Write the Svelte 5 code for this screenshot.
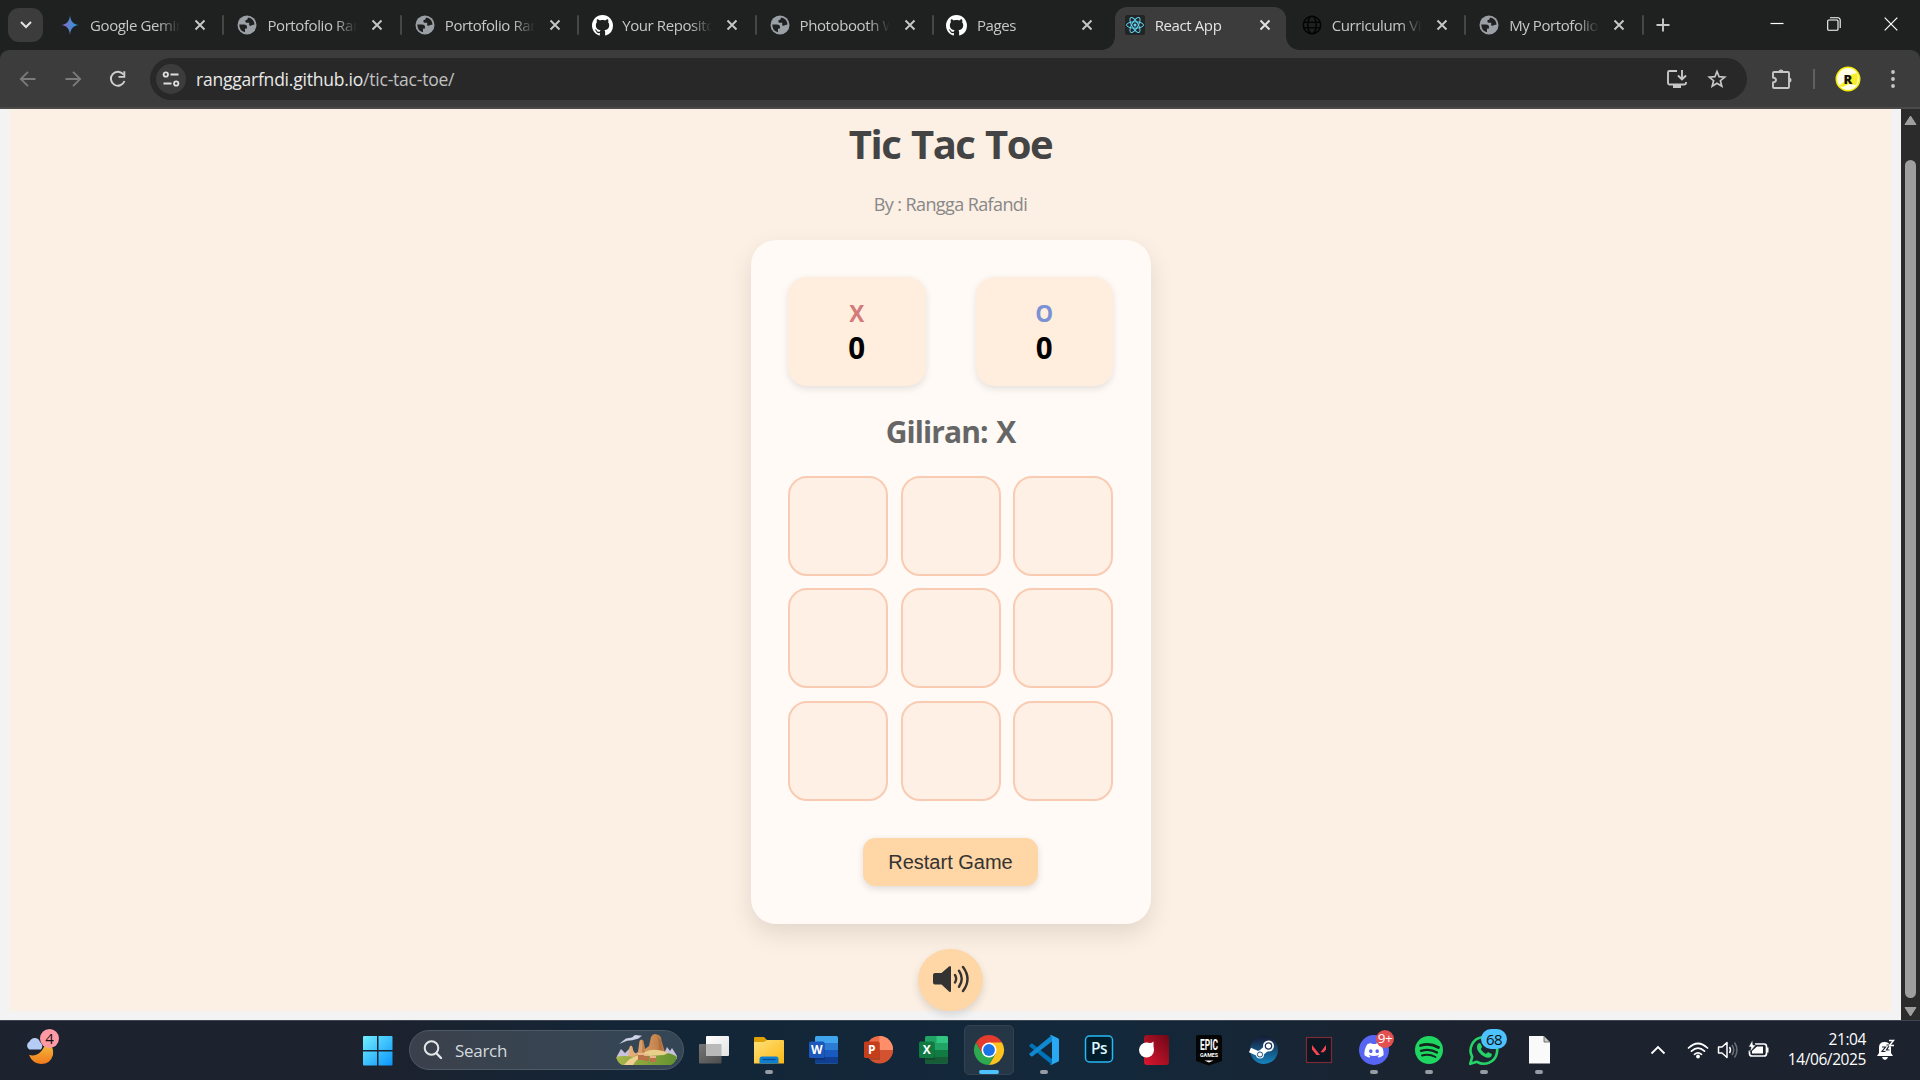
<script>
  const tabs = [
    { icon: 'gemini', title: 'Google Gemini' },
    { icon: 'globe', title: 'Portofolio Rangga' },
    { icon: 'globe', title: 'Portofolio Rangga' },
    { icon: 'github', title: 'Your Repositories' },
    { icon: 'globe', title: 'Photobooth Web' },
    { icon: 'github', title: 'Pages' },
    { icon: 'react', title: 'React App', active: true },
    { icon: 'wire', title: 'Curriculum Vitae' },
    { icon: 'globe', title: 'My Portofolio' }
  ];
  const apps = [
    { name: 'taskview' },
    { name: 'explorer', open: true },
    { name: 'word' },
    { name: 'powerpoint' },
    { name: 'excel' },
    { name: 'chrome', active: true },
    { name: 'vscode', open: true },
    { name: 'photoshop' },
    { name: 'redapp' },
    { name: 'epic' },
    { name: 'steam' },
    { name: 'valorant' },
    { name: 'discord', open: true, badge: '9+', tone: 'red' },
    { name: 'spotify', open: true },
    { name: 'whatsapp', open: true, badge: '68', tone: 'blue' },
    { name: 'file', open: true }
  ];

  let board = $state(Array(9).fill(''));
  let turn = $state('X');
  const scores = $state({ X: 0, O: 0 });
  const lines = [[0, 1, 2], [3, 4, 5], [6, 7, 8], [0, 3, 6], [1, 4, 7], [2, 5, 8], [0, 4, 8], [2, 4, 6]];

  function winner() {
    return lines.some(([a, b, c]) => board[a] && board[a] === board[b] && board[b] === board[c]);
  }
  function play(i) {
    if (board[i] || winner()) return;
    board[i] = turn;
    if (winner()) scores[turn] += 1;
    else turn = turn === 'X' ? 'O' : 'X';
  }
  function restart() {
    board = Array(9).fill('');
    turn = 'X';
  }
</script>

{#snippet favicon(name)}
  {#if name === 'gemini'}
    <svg width="20" height="22" viewBox="0 0 20 22">
      <defs><linearGradient id="gem" x1="0" x2="1"><stop offset="0.1" stop-color="#9168c0" /><stop offset="0.5" stop-color="#5684d1" /><stop offset="1" stop-color="#1ba1e3" /></linearGradient></defs>
      <path fill="url(#gem)" d="M10 1C10.5 7 13 10.500 19 11C13 11.500 10.500 15 10 21C9.500 15 7 11.500 1 11C7 10.500 9.500 7 10 1Z" />
    </svg>
  {:else if name === 'globe'}
    <svg width="22" height="22" viewBox="1 1 22 22">
      <circle cx="12" cy="12" r="9.500" fill="#9aa0a6" />
      <path fill="#1f2120" d="M4.300 11.500H9q3 0 3 2.500v1.500h-1.500q-.5 0-.5 1v2.800Q4.300 18 4.300 11.500zM13 4.500q0 2.500-2.500 2.700-.8 2.300 1 2.600h2.700v2.500q1 1 2.500 0l2.800-.8Q19 5.500 13 4.500z" />
    </svg>
  {:else if name === 'github'}
    <svg width="21" height="21" viewBox="0 0 16 16"><path fill="#fff" d="M8 0C3.580 0 0 3.580 0 8c0 3.540 2.290 6.530 5.470 7.590.4.070.55-.17.55-.38 0-.19-.01-.82-.01-1.490-2.010.37-2.530-.49-2.690-.94-.09-.23-.48-.94-.82-1.130-.28-.15-.68-.52-.01-.53.63-.01 1.080.58 1.230.82.72 1.210 1.870.87 2.330.66.070-.52.28-.87.51-1.070-1.780-.2-3.640-.89-3.640-3.950 0-.87.31-1.590.82-2.150-.08-.2-.36-1.020.08-2.120 0 0 .67-.21 2.200.82.64-.18 1.320-.27 2-.27s1.360.09 2 .27c1.530-1.040 2.200-.82 2.200-.82.44 1.100.16 1.920.08 2.120.51.56.82 1.270.82 2.150 0 3.070-1.870 3.750-3.650 3.950.29.25.54.73.54 1.480 0 1.070-.01 1.930-.01 2.200 0 .21.15.46.55.38A8.010 8.010 0 0 0 16 8c0-4.420-3.580-8-8-8z" /></svg>
  {:else if name === 'react'}
    <svg width="20" height="20" viewBox="-10 -10 20 20">
      <rect x="-10" y="-10" width="20" height="20" rx="2" fill="#222526" />
      <g fill="none" stroke="#5fd3f3" stroke-width="1">
        <ellipse rx="8.500" ry="3.200" /><ellipse rx="8.500" ry="3.200" transform="rotate(60)" /><ellipse rx="8.500" ry="3.200" transform="rotate(120)" />
      </g>
      <circle r="1.500" fill="#5fd3f3" />
    </svg>
  {:else}
    <svg width="20" height="20" viewBox="-10 -10 20 20"><g fill="none" stroke="#050505" stroke-width="1.600"><circle r="8.700" /><ellipse rx="4.200" ry="8.700" /><path d="M-8.500-2.800h17M-8.500 2.800h17" /></g></svg>
  {/if}
{/snippet}

{#snippet officeSheet(c)}
  <rect x="-9" y="-14" width="23" height="27.500" rx="1.500" fill={c[0]} />
  <rect x="-9" y="-7" width="23" height="7" fill={c[1]} />
  <rect x="-9" y="0" width="23" height="7" fill={c[2]} />
  <path d="M-9 7h23v5a1.500 1.500 0 0 1-1.500 1.500h-20A1.500 1.500 0 0 1-9 12z" fill={c[3]} />
{/snippet}

{#snippet officeTile(letter, color)}
  <rect x="-9" y="-7" width="10" height="17" fill="#000" opacity=".18" />
  <rect x="-15" y="-8.500" width="15.500" height="16.500" rx="1.500" fill={color} />
  <text x="-7.300" y="4.200" text-anchor="middle" class="glyph">{letter}</text>
{/snippet}

{#snippet appIcon(name)}
  <svg class="app-icon" viewBox="-20 -20 40 40">
    {#if name === 'taskview'}
      <defs>
        <linearGradient id="tv1" x2="1" y2="1"><stop stop-color="#fff" /><stop offset="1" stop-color="#e2e2e2" /></linearGradient>
        <linearGradient id="tv2" x2="1" y2="1"><stop stop-color="#757575" /><stop offset="1" stop-color="#4d4d4d" /></linearGradient>
      </defs>
      <rect x="-15" y="-6" width="22.500" height="19.500" rx="1" fill="url(#tv2)" />
      <rect x="-8" y="-14" width="23" height="20" rx="1" fill="url(#tv1)" />
      <path d="M-8-6H7.500V6H-8z" fill="#b9b9b9" />
    {:else if name === 'explorer'}
      <defs><linearGradient id="fold" x2="1" y2="1"><stop stop-color="#ffe07a" /><stop offset="1" stop-color="#fbb914" /></linearGradient></defs>
      <path d="M-15-12q0-1 1-1h9l3 3h12v6h-25z" fill="#e0a106" />
      <path d="M-15-8h10l3-2h16q1 0 1 1v22.500h-30z" fill="url(#fold)" />
      <path d="M-9.500 13.500v-4.500q0-2.500 2.500-2.500h14q2.500 0 2.500 2.500v4.500z" fill="#0f7fd2" />
      <path d="M-6.500 9.500h13" stroke="#0a4c8c" stroke-width="1.200" />
    {:else if name === 'word'}
      {@render officeSheet(['#41a5ee', '#2b7cd3', '#185abd', '#103f91'])}
      {@render officeTile('W', '#1c57bb')}
    {:else if name === 'excel'}
      {@render officeSheet(['#21a366', '#21a366', '#107c41', '#185c37'])}
      <path d="M2.500-14H12.500a1.500 1.500 0 0 1 1.500 1.500V-7H2.500z" fill="#33c481" />
      {@render officeTile('X', '#117a42')}
    {:else if name === 'powerpoint'}
      <circle cx="0.500" cy="-0.500" r="13.500" fill="#ed6c47" />
      <path d="M.5-14A13.500 13.500 0 0 1 14 0H.5z" fill="#ff8f6b" />
      <path d="M-13 0H14A13.500 13.500 0 0 1-13 0z" fill="#d35230" />
      {@render officeTile('P', '#c43e1c')}
    {:else if name === 'chrome'}
      <path d="M0 0L-13-7.500A15 15 0 0 1 13-7.500z" fill="#e33b2e" />
      <path d="M0-7.500H13A15 15 0 0 1 0 15L6.500 3.750z" fill="#fcc31e" />
      <path d="M-13-7.500A15 15 0 0 0 0 15L6.500 3.750L-6.500 3.750z" fill="#2da94f" />
      <path d="M-13-7.500L-6.500 3.750L0-7.500z" fill="#e33b2e" />
      <circle r="7.500" fill="#fff" /><circle r="5.900" fill="#1a73e8" />
    {:else if name === 'vscode'}
      <path d="M-15-4l2-2.200q.8-.6 1.600 0L8 9v6z" fill="#0072b8" />
      <path d="M-15 4l2 2.200q.8.600 1.600 0L8-8.500v-6.500z" fill="#0f8ad2" />
      <path d="M7-15l7 3.200q1 .5 1 1.600v20.400q0 1.100-1 1.600L7 15q-1 .3-1.500-.5Q8 15.500 8 12v-24q0-3-2.500-2.500Q6-15.300 7-15z" fill="#28a9f2" />
    {:else if name === 'photoshop'}
      <rect x="-13.500" y="-14" width="27" height="26" rx="4" fill="#001d2b" stroke="#26b9f5" stroke-width="1.500" />
      <text x="0" y="4" text-anchor="middle" class="ps">Ps</text>
    {:else if name === 'redapp'}
      <defs><linearGradient id="red" x1="1" x2="0" y2="1"><stop stop-color="#6d0716" /><stop offset="1" stop-color="#dc1730" /></linearGradient></defs>
      <rect x="-10" y="-15" width="25" height="30" rx="3" fill="url(#red)" />
      <circle cx="-7.500" r="7.500" fill="#fff" /><path d="M-7-7.500Q-3-6-.5-8.500V0z" fill="#fff" />
    {:else if name === 'epic'}
      <path d="M-13-13q0-2 2-2h22q2 0 2 2V11L0 15.500-13 11z" fill="#050505" />
      <text x="0" y="0" text-anchor="middle" class="epic" textLength="18" lengthAdjust="spacingAndGlyphs">EPIC</text>
      <text x="0" y="7" text-anchor="middle" class="games" textLength="18" lengthAdjust="spacingAndGlyphs">GAMES</text>
      <path d="M-4.500 10.500h9L0 12.500z" fill="#fff" />
    {:else if name === 'steam'}
      <defs><linearGradient id="steam" y2="1" x2="0"><stop stop-color="#171a35" /><stop offset="1" stop-color="#1485c0" /></linearGradient></defs>
      <circle r="14" fill="url(#steam)" />
      <path d="M-14 0L-3 5" stroke="#fff" stroke-width="5" />
      <path d="M-4 4L5-4" stroke="#fff" stroke-width="6" />
      <circle cx="4.500" cy="-4" r="5.500" fill="#fff" /><circle cx="4.500" cy="-4" r="3.200" fill="#fff" stroke="#1b3458" stroke-width="1.300" />
      <circle cx="-4" cy="4.500" r="4" fill="#fff" /><circle cx="-4" cy="4.500" r="2.600" fill="none" stroke="#1b4c78" stroke-width="1" />
    {:else if name === 'valorant'}
      <rect x="-12.500" y="-12.500" width="25" height="25" fill="#0d1722" stroke="#7c2a36" stroke-width="1.200" />
      <path d="M-7-5L1 5H-2.500L-7-.5zM7-5V-.5L4.800 2.200H1.500z" fill="#fa4454" />
    {:else if name === 'discord'}
      <circle r="15" fill="#5865f2" />
      <path transform="translate(-9.600 -9.200) scale(.8)" fill="#fff" d="M20.317 4.370a19.800 19.800 0 0 0-4.885-1.515.074.074 0 0 0-.079.037c-.21.375-.444.865-.608 1.250a18.300 18.300 0 0 0-5.487 0c-.163-.394-.405-.875-.617-1.250a.077.077 0 0 0-.079-.037A19.700 19.700 0 0 0 3.677 4.370C.533 9.046-.32 13.580.099 18.058c2.053 1.507 4.073 2.423 6.024 3.030.5-.63.900-1.295 1.310-2.022-.65-.25-1.310-.647-1.914-.998l.45-.39c3.930 1.793 8.180 1.793 12.062 0l.45.390c-.6.350-1.240.750-1.914 1 .36.697.810 1.390 1.310 2.020 1.960-.607 3.980-1.523 6.033-3.030.5-5.177-.838-9.674-3.593-13.688zM8.020 15.331c-1.183 0-2.157-1.085-2.157-2.419 0-1.333.955-2.419 2.157-2.419 1.210 0 2.176 1.096 2.157 2.420 0 1.333-.956 2.418-2.157 2.418zm7.975 0c-1.183 0-2.157-1.085-2.157-2.419 0-1.333.955-2.419 2.157-2.419 1.210 0 2.176 1.096 2.157 2.420 0 1.333-.946 2.418-2.157 2.418z" />
    {:else if name === 'spotify'}
      <circle r="14" fill="#1ed760" />
      <g fill="none" stroke="#15241e" stroke-linecap="round"><path d="M-8.500-4.500Q1-7.500 9.500-2.500" stroke-width="2.800" /><path d="M-8 .8Q1-1.800 8 2.500" stroke-width="2.300" /><path d="M-7 5.500Q0 3.500 6.500 7" stroke-width="1.900" /></g>
    {:else if name === 'whatsapp'}
      <path d="M-13.800 13.800l2-7A13.300 13.300 0 1 1-7 11.800z" fill="#1c2631" stroke="#25d366" stroke-width="2.600" stroke-linejoin="round" />
      <path d="M-6.500-5.500q1.500-2.500 3-1l1.500 3.300q.2.700-1.300 2.200Q-1 3 2 4q1.500-2 2.300-1.800L7.500 3.800q1 1-.5 3-2.500 2-7-.3-6.500-3.800-7-8.500-.1-2 .5-3.500z" fill="#25d366" />
    {:else}
      <path d="M-10-14H5l6 6V13.500H-10z" fill="#fafafa" /><path d="M5-14v6h6z" fill="#c9c9c9" stroke="#555" stroke-width=".8" />
    {/if}
  </svg>
{/snippet}

<div class="screen">
  <header class="tabstrip">
    <button class="tab-search" aria-label="Search tabs"><svg width="14" height="10" viewBox="0 0 14 10"><path d="M2 2l5 5 5-5" fill="none" stroke="#e3e3e3" stroke-width="2" /></svg></button>
    <div class="tabs">
      {#each tabs as tab, i}
        <div class="tab" class:active={tab.active} class:divided={!tab.active && !tabs[i + 1]?.active}>
          <span class="fav">{@render favicon(tab.icon)}</span>
          <span class="tab-title">{tab.title}</span>
          <svg class="close" width="12" height="12" viewBox="0 0 12 12"><path d="M1.500 1.500l9 9M10.500 1.500l-9 9" stroke="currentColor" stroke-width="1.900" /></svg>
        </div>
      {/each}
    </div>
    <svg class="new-tab" width="14" height="14" viewBox="0 0 14 14"><path d="M7 .5v13M.5 7h13" stroke="#c7c7c7" stroke-width="1.900" /></svg>
    <div class="window-controls">
      <svg width="14" height="14" viewBox="0 0 14 14"><path d="M.5 6.500h13" stroke="#fff" stroke-width="1.200" /></svg>
      <svg width="14" height="14" viewBox="0 0 14 14"><g fill="none" stroke="#fff" stroke-width="1.100"><rect x=".7" y="3" width="10.300" height="10.300" rx="1" /><path d="M3 .8h8a2.200 2.200 0 0 1 2.200 2.200v8" /></g></svg>
      <svg width="14" height="14" viewBox="0 0 14 14"><path d="M.7.7l12.600 12.600M13.300.7L.7 13.300" stroke="#fff" stroke-width="1.200" /></svg>
    </div>
  </header>

  <div class="toolbar-wrap">
    <nav class="toolbar">
      <div class="nav-buttons">
        <svg width="18" height="18" viewBox="0 0 18 18"><path d="M16.500 9H2M9 1.800L1.800 9 9 16.200" fill="none" stroke="#7b7b7b" stroke-width="1.800" /></svg>
        <svg width="18" height="18" viewBox="0 0 18 18"><path d="M1.500 9H16M9 1.800L16.200 9 9 16.200" fill="none" stroke="#7b7b7b" stroke-width="1.800" /></svg>
        <svg width="18" height="18" viewBox="0 0 18 18"><path d="M15.500 11A7 7 0 1 1 14.500 4.500" fill="none" stroke="#d0d0d0" stroke-width="1.900" /><path d="M15.300 1.200v5.700H9.500" fill="none" stroke="#d0d0d0" stroke-width="1.900" /></svg>
      </div>
      <div class="omnibox">
        <span class="site-chip"><svg width="18" height="16" viewBox="0 0 18 16"><g fill="none" stroke="#dedede" stroke-width="1.800"><circle cx="3.800" cy="3.500" r="2.200" /><path d="M8.500 3.500h8M1.500 12.500h8" /><circle cx="14.200" cy="12.500" r="2.200" /></g></svg></span>
        <span class="url">ranggarfndi.github.io<span class="path">/tic-tac-toe/</span></span>
        <svg class="install" width="22" height="20" viewBox="0 0 22 20"><g fill="none" stroke="#c7c7c7" stroke-width="1.900"><path d="M11 2H3.500Q2 2 2 3.500v10.500q0 1.500 1.500 1.500h15q1.500 0 1.500-1.500V13M16 1v9M12 6.500l4 4 4-4" /></g><path d="M7 15.500h8v3.500H7z" fill="#c7c7c7" /></svg>
        <svg class="star" width="20" height="20" viewBox="0 0 20 20"><path d="M10 2.500l2.100 5.200 5.600.4-4.300 3.600 1.400 5.500L10 14.200l-4.800 3 1.400-5.500L2.300 8.100l5.600-.4z" fill="none" stroke="#c7c7c7" stroke-width="1.700" /></svg>
      </div>
      <svg class="puzzle" width="22" height="22" viewBox="0 0 22 22"><path d="M2 5q0-1 1-1h14q1 0 1 1v14q0 1-1 1H3q-1 0-1-1v-4.500q3-.5 3-2.500t-3-2.500z" fill="none" stroke="#c7c7c7" stroke-width="1.900" /><path d="M7.500 4a2.500 2.500 0 0 1 5 0zM18 9.500a2.500 2.500 0 0 1 0 5z" fill="#c7c7c7" /></svg>
      <span class="bar-divider"></span>
      <svg class="avatar" width="26" height="26" viewBox="-13 -13 26 26"><circle r="11.700" fill="#fffde8" stroke="#f5ec00" stroke-width="1.600" /><path d="M-9 7L-2 1 2-4 9-6Q11 0 8 6L1 5-5 8z" fill="#f7ee2b" /><text y="4.500" text-anchor="middle" class="avatar-r">R</text></svg>
      <svg class="dots" width="6" height="20" viewBox="0 0 6 20"><g fill="#c7c7c7"><circle cx="3" cy="3" r="1.900" /><circle cx="3" cy="10" r="1.900" /><circle cx="3" cy="17" r="1.900" /></g></svg>
    </nav>
  </div>

  <div class="viewport">
    <main class="page">
      <div class="app">
        <h1>Tic Tac Toe</h1>
        <p class="byline">By : Rangga Rafandi</p>
        <section class="card">
          <div class="scores">
            <div class="score"><span class="mark x">X</span><span class="points">{scores.X}</span></div>
            <div class="score"><span class="mark o">O</span><span class="points">{scores.O}</span></div>
          </div>
          <h2>Giliran: {turn}</h2>
          <div class="board">
            {#each board as cell, i}
              <button class="cell" aria-label="Cell {i + 1}" onclick={() => play(i)}>{cell}</button>
            {/each}
          </div>
          <button class="restart" onclick={restart}>Restart Game</button>
        </section>
        <button class="sound" aria-label="Sound">
          <svg width="38" height="28" viewBox="0 0 38 28"><path d="M1 10q0-2 2-2h6.500L17 1.500Q19 0 19 2.500v23q0 2.500-2 1L9.500 19.500H3q-2 0-2-2z" fill="#333" /><g fill="none" stroke="#333" stroke-width="2.400" stroke-linecap="round"><path d="M23 10q2.300 3.500 0 7.500M27 5.800q5.500 8 0 16M31 2q9 12 0 24" /></g></svg>
        </button>
      </div>
    </main>
    <div class="scrollbar">
      <svg width="13" height="11" viewBox="0 0 13 11"><path d="M6.500 1L12 9.500H1z" fill="#9f9f9f" stroke="#9f9f9f" stroke-linejoin="round" /></svg>
      <span class="thumb"></span>
      <svg width="13" height="11" viewBox="0 0 13 11"><path d="M6.500 10L12 1.500H1z" fill="#9f9f9f" stroke="#9f9f9f" stroke-linejoin="round" /></svg>
    </div>
  </div>

  <footer class="taskbar">
    <div class="weather">
      <svg width="36" height="36" viewBox="0 0 36 36">
        <defs><linearGradient id="moon" x2="0" y2="1"><stop stop-color="#f5c543" /><stop offset="1" stop-color="#f07a1c" /></linearGradient></defs>
        <path d="M21.500 9q8 6 6.500 14-2.500 9-12 9-8.500-.5-12-9 12 3 17.500-14z" fill="url(#moon)" />
        <path d="M4.500 17.500a4.500 4.500 0 0 1 0-8q2-4 6-3.500 3.500.5 4.500 4 4 3.500 1 7.500z" fill="#b5cdf5" />
      </svg>
      <span class="count">4</span>
    </div>
    <svg class="start" width="30" height="30" viewBox="0 0 30 30">
      <defs><linearGradient id="win" x2="1" y2="1"><stop stop-color="#72efff" /><stop offset="1" stop-color="#0a94fb" /></linearGradient></defs>
      <path fill="url(#win)" d="M1 0H14V14H0V1q0-1 1-1zM15.500 0H28.500q1 0 1 1V14h-14zM0 15.500H14V29.500H1q-1 0-1-1zM15.500 15.500h14V28.500q0 1-1 1H15.500z" />
    </svg>
    <div class="search">
      <svg width="20" height="20" viewBox="0 0 20 20"><circle cx="8.500" cy="8" r="6.800" fill="none" stroke="#e4e7ea" stroke-width="2" /><path d="M13.200 13l4.800 5" stroke="#e4e7ea" stroke-width="2.400" stroke-linecap="round" /></svg>
      <span>Search</span>
      <svg class="scene" width="62" height="32" viewBox="0 0 62 32">
        <defs><linearGradient id="rock" x2="1"><stop stop-color="#eab27a" /><stop offset="1" stop-color="#b8743f" /></linearGradient><linearGradient id="grass" x2="1"><stop stop-color="#a8b748" /><stop offset="1" stop-color="#63902f" /></linearGradient></defs>
        <path d="M1 22l4-7 4 4 5-5 9 9H1zM47 22l4-9 3 4 2-3 5 8v3H47z" fill="#c9c2dd" />
        <path d="M3 10L10 4.500l6-1 3-2.500 7 .8-4 3-6 1.500-5 .5z" fill="#cfd3ea" />
        <path d="M12 24l1.500-11q1.500-3 3 0l1.500 7 4-2 1.500-11q2-3 4 0l1.500 8 4-3 2-9q2-4 6-2.500 4.500 1 4.500 6l3 10 1.500 8z" fill="url(#rock)" />
        <path d="M41 2q3 8 1 18l5 2-2-16zM26 6q1 6 0 12l3 1-1-12z" fill="#874b2a" opacity=".3" />
        <path d="M0 23q8-2 17 0 12-6 27-5 13 1 17 5-1 5-6 8H6q-5-3-6-8z" fill="url(#grass)" />
        <path d="M26 20q10-8 26-1l-4 2-16 1z" fill="#e8d08a" />
        <path d="M8 31q6-8 15-10l5 1q-8 3-11 9z" fill="#f0cf92" />
        <path d="M22 19h6v7h-6zM28 20h5v7h-5zM34 22h6v6h-6z" fill="#b97349" /><path d="M22 19h6v2h-6zM28 20h5v2h-5zM34 22h6v2h-6z" fill="#e8b78d" />
      </svg>
    </div>
    <div class="apps">
      {#each apps as app}
        <div class="app-slot" class:current={app.active}>
          {@render appIcon(app.name)}
          {#if app.badge}<span class="badge {app.tone}">{app.badge}</span>{/if}
          {#if app.open || app.active}<span class="indicator"></span>{/if}
        </div>
      {/each}
    </div>
    <div class="tray">
      <svg width="16" height="10" viewBox="0 0 16 10"><path d="M1.500 8.500L8 2l6.500 6.500" fill="none" stroke="#fff" stroke-width="1.800" /></svg>
      <svg class="wifi" width="22" height="18" viewBox="0 0 22 18"><g fill="none" stroke="#fff" stroke-width="1.700" stroke-linecap="round"><path d="M1.500 7q9.500-9 19 0M4.500 10.200q6.500-6 13 0M7.500 13.300q3.500-3 7 0" /></g><circle cx="11" cy="15.500" r="1.900" fill="#fff" /></svg>
      <svg class="vol" width="22" height="18" viewBox="0 0 22 18"><g fill="none" stroke="#fff" stroke-width="1.500" stroke-linejoin="round"><path d="M1.500 6h3.500l5-4.500v15L5 12H1.500z" /><path d="M12.500 6q2 3 0 6" /><path d="M15 4q3.500 5 0 10M17.500 1.500q5 7.500 0 15" opacity=".35" /></g></svg>
      <svg class="battery" width="22" height="20" viewBox="0 0 22 20"><path d="M7 4h9q2.500 0 2.500 2.500v7q0 2.500-2.500 2.500H4q-2.500 0-2.500-2.500v-3" fill="none" stroke="#fff" stroke-width="1.700" /><path d="M9 6.500h6v7H4V11zM19 7.500h1.500v5H19z" fill="#fff" /><path d="M4.500 0L.5 7H3L2 12l6-7H5z" fill="#fff" stroke="#1c222e" stroke-width=".6" /></svg>
      <div class="clock"><span>21:04</span><span>14/06/2025</span></div>
      <svg class="bell" width="20" height="22" viewBox="0 0 20 22"><path d="M1 17l2-3V8.500Q3 3 8.500 3T15 8.500V14l2 3zM6 18h6q-.8 3-3 3t-3-3z" fill="#fff" /><path d="M6 8h3.500L6 12.500h3.500M10.500 6h3l-3 5h3" fill="none" stroke="#1c222e" stroke-width="1.200" /><path d="M13 1.500h4.500l-4 5h4.500" fill="none" stroke="#fff" stroke-width="1.400" /></svg>
    </div>
  </footer>
</div>

<style>
  :global(body) { margin: 0; overflow: hidden; }
  .screen { width: 1920px; height: 1080px; display: flex; flex-direction: column; overflow: hidden; font-family: 'Open Sans', 'Noto Sans', sans-serif; background: #1f2120; }
  * { box-sizing: border-box; }
  svg { display: block; flex: none; }
  button { border: 0; padding: 0; font: inherit; cursor: pointer; }

  .tabstrip { height: 50px; flex: none; display: flex; align-items: stretch; padding-left: 8px; background: #1f2120; }
  .tab-search { width: 35px; height: 34px; margin: 8px 4px 0 0; border-radius: 11px; background: #3c3c3c; display: grid; place-items: center; }
  .tabs { display: flex; }
  .tab { width: 177.4px; position: relative; display: flex; align-items: center; padding-left: 12px; color: #c7c7c7; }
  .tab.divided::after { content: ''; width: 2px; height: 20px; border-radius: 1px; background: #454746; position: absolute; right: 0; top: 15px; }
  .tab.active { background: #3c3c3c; border-radius: 12px 12px 0 0; margin: 7px 3px 0 3.400px; width: 171px; padding: 0 0 7px 9px; color: #e3e3e3; }
  .tab.active::before, .tab.active::after { content: ''; position: absolute; bottom: 0; width: 13px; height: 13px; }
  .tab.active::before { left: -13px; background: radial-gradient(circle at 0 0, transparent 12.500px, #3c3c3c 13px); }
  .tab.active::after { right: -13px; background: radial-gradient(circle at 100% 0, transparent 12.500px, #3c3c3c 13px); }
  .fav { width: 22px; display: grid; place-items: center; }
  .tab-title { margin-left: 9px; width: 90px; font-size: 15px; letter-spacing: -.4px; line-height: 22px; white-space: nowrap; overflow: hidden; mask-image: linear-gradient(90deg, #000 68px, transparent 90px); }
  .active .tab-title { color: #e3e3e3; }
  .close { margin-left: 14px; }
  .new-tab { margin: 18px 0 0 12.500px; }
  .window-controls { margin: 17px 22px 0 auto; display: flex; gap: 43px; }

  .toolbar-wrap { background: #1f2120; flex: none; }
  .toolbar { height: 59px; background: #3c3c3c; border-radius: 9px 9px 0 0; border-bottom: 2px solid #4a4a4a; display: flex; align-items: center; }
  .nav-buttons { display: flex; gap: 27px; margin-left: 19px; }
  .omnibox { width: 1597px; height: 42px; margin-left: 23px; border-radius: 21px; background: #282828; display: flex; align-items: center; padding: 0 20px 0 6px; }
  .site-chip { width: 30px; height: 30px; border-radius: 50%; background: #3c3c3c; display: grid; place-items: center; }
  .url { margin-left: 10px; flex: 1; color: #e8e8e8; font-size: 17.500px; letter-spacing: -.22px; }
  .path { color: #c0c0c0; }
  .install { margin-right: 19px; }
  .puzzle { margin-left: 24px; }
  .bar-divider { width: 2px; height: 20px; margin-left: 20px; background: #5f6060; }
  .avatar { margin-left: 20px; }
  .dots { margin-left: 29px; }
  .avatar-r { font: 800 13px 'Open Sans', sans-serif; fill: #111; }

  .viewport { height: 911px; flex: none; display: flex; background: #f3f3f3; }
  .page { flex: 1; padding: 0 10px 9px 10px; }
  .app { height: 902px; background: #fcefe3; display: flex; flex-direction: column; align-items: center; }
  h1 { margin: 8px 0 0; font-size: 40px; line-height: 54px; font-weight: 700; color: #444; letter-spacing: -1.500px; word-spacing: 1.800px; }
  .byline { margin: 20px 0 0; font-size: 18px; line-height: 27px; color: #888; letter-spacing: -.6px; }
  .card { width: 400px; height: 684px; margin-top: 22px; padding: 37px 37.500px; border-radius: 25px; background: #fffaf5; box-shadow: 0 10px 25px rgba(0, 0, 0, .1); display: flex; flex-direction: column; align-items: center; flex: none; }
  .scores { width: 100%; display: flex; justify-content: space-between; }
  .score { width: 137.5px; height: 109px; border-radius: 19px; background: #ffeedd; box-shadow: 0 2.500px 7.500px rgba(0, 0, 0, .1); display: flex; flex-direction: column; align-items: center; padding-top: 21px; font-weight: 700; }
  .mark { font-size: 22.500px; line-height: 31px; }
  .x { color: #d47a7a; }
  .o { color: #7a91d4; }
  .points { font-size: 29.500px; line-height: 38px; color: #000; }
  h2 { margin: 26px 0 0; font-size: 30px; line-height: 40px; font-weight: 700; color: #666; letter-spacing: -.9px; word-spacing: 1.500px; }
  .board { margin-top: 23.900px; display: grid; grid-template-columns: repeat(3, 100px); grid-auto-rows: 100px; gap: 12.500px; }
  .cell { border: 2px solid #f9cbb3; border-radius: 19px; background: #fff0e5; font-size: 40px; font-weight: 700; color: #555; }
  .restart { width: 175px; height: 48px; margin-top: 37.100px; padding-top: 1px; flex: none; border-radius: 12.500px; background: #ffd6a5; color: #333; font: 20px 'Liberation Sans', Arial, sans-serif; box-shadow: 0 2.500px 7.500px rgba(0, 0, 0, .12); }
  .sound { width: 65px; height: 62px; margin-top: 25px; flex: none; border-radius: 50%; background: #ffd6a5; display: grid; place-items: center; padding: 0 0 3px 1px; box-shadow: 0 4px 8px rgba(0, 0, 0, .12); }

  .scrollbar { width: 19px; background: #2b2b2b; display: flex; flex-direction: column; align-items: center; padding: 6px 0 3px; }
  .thumb { width: 11px; height: 838px; margin: 34px 0 auto; border-radius: 6px; background: #9f9f9f; }

  .taskbar { height: 60px; flex: none; display: flex; align-items: center; border-top: 1px solid #3d4652; background: linear-gradient(90deg, #1c222e 0, #1c222e 380px, #122638 660px, #13283a 1120px, #1c222e 1480px, #1c222e 100%); color: #fff; }
  .weather { width: 36px; height: 36px; margin: -2px 0 0 25px; position: relative; }
  .count { position: absolute; left: 15px; top: -3px; width: 19px; height: 19px; border-radius: 50%; background: #ff9aa5; color: #111; font-size: 15px; line-height: 19px; text-align: center; }
  .start { margin-left: 302px; }
  .search { width: 275px; height: 40px; margin: -1px 0 0 16px; border-radius: 20px; border: 1px solid #4e5a66; background: linear-gradient(90deg, #3b414c, #344656); display: flex; align-items: center; padding: 0 5px 0 13px; font-size: 17px; letter-spacing: -.3px; color: #d5dade; }
  .search span { margin-left: 12px; flex: 1; }
  .apps { display: flex; margin: -1px 0 0 2.500px; }
  .app-slot { width: 50px; height: 50px; margin: 0 2.500px; border-radius: 5px; display: grid; place-items: center; position: relative; border: 1px solid transparent; }
  .current { background: #253647; border-color: #314252; }
  .app-icon { width: 40px; height: 40px; }
  .indicator { position: absolute; left: calc(50% - 4px); bottom: 0; width: 8px; height: 4px; border-radius: 2px; background: #969ca3; }
  .current .indicator { width: 20px; left: calc(50% - 10px); background: #4cc2ff; }
  .badge { position: absolute; border-radius: 10px; text-align: center; letter-spacing: -.5px; }
  .red { width: 18px; height: 18px; left: 26px; top: 4px; font-size: 13.500px; line-height: 17px; background: #e2504f; color: #fff; }
  .blue { width: 26px; height: 20px; left: 21px; top: 3px; font-size: 15px; line-height: 20px; background: #4cc2ff; color: #111; }
  .glyph { font: 700 12px 'Open Sans', sans-serif; fill: #fff; }
  .ps { font: 600 15.500px 'Open Sans', sans-serif; fill: #dff3ff; letter-spacing: -.6px; }
  .epic { font: 700 14px 'Roboto', sans-serif; fill: #fff; }
  .games { font: 700 6px 'Roboto', sans-serif; fill: #fff; }

  .tray { margin: -1px 0 0 auto; padding-right: 24px; display: flex; align-items: center; }
  .wifi { margin-left: 21px; }
  .vol { margin-left: 8px; }
  .battery { margin-left: 9px; }
  .clock { width: 96px; margin-top: -3px; display: flex; flex-direction: column; align-items: flex-end; font-size: 15.500px; line-height: 20px; letter-spacing: -.4px; }
  .bell { margin-left: 10px; }
</style>
